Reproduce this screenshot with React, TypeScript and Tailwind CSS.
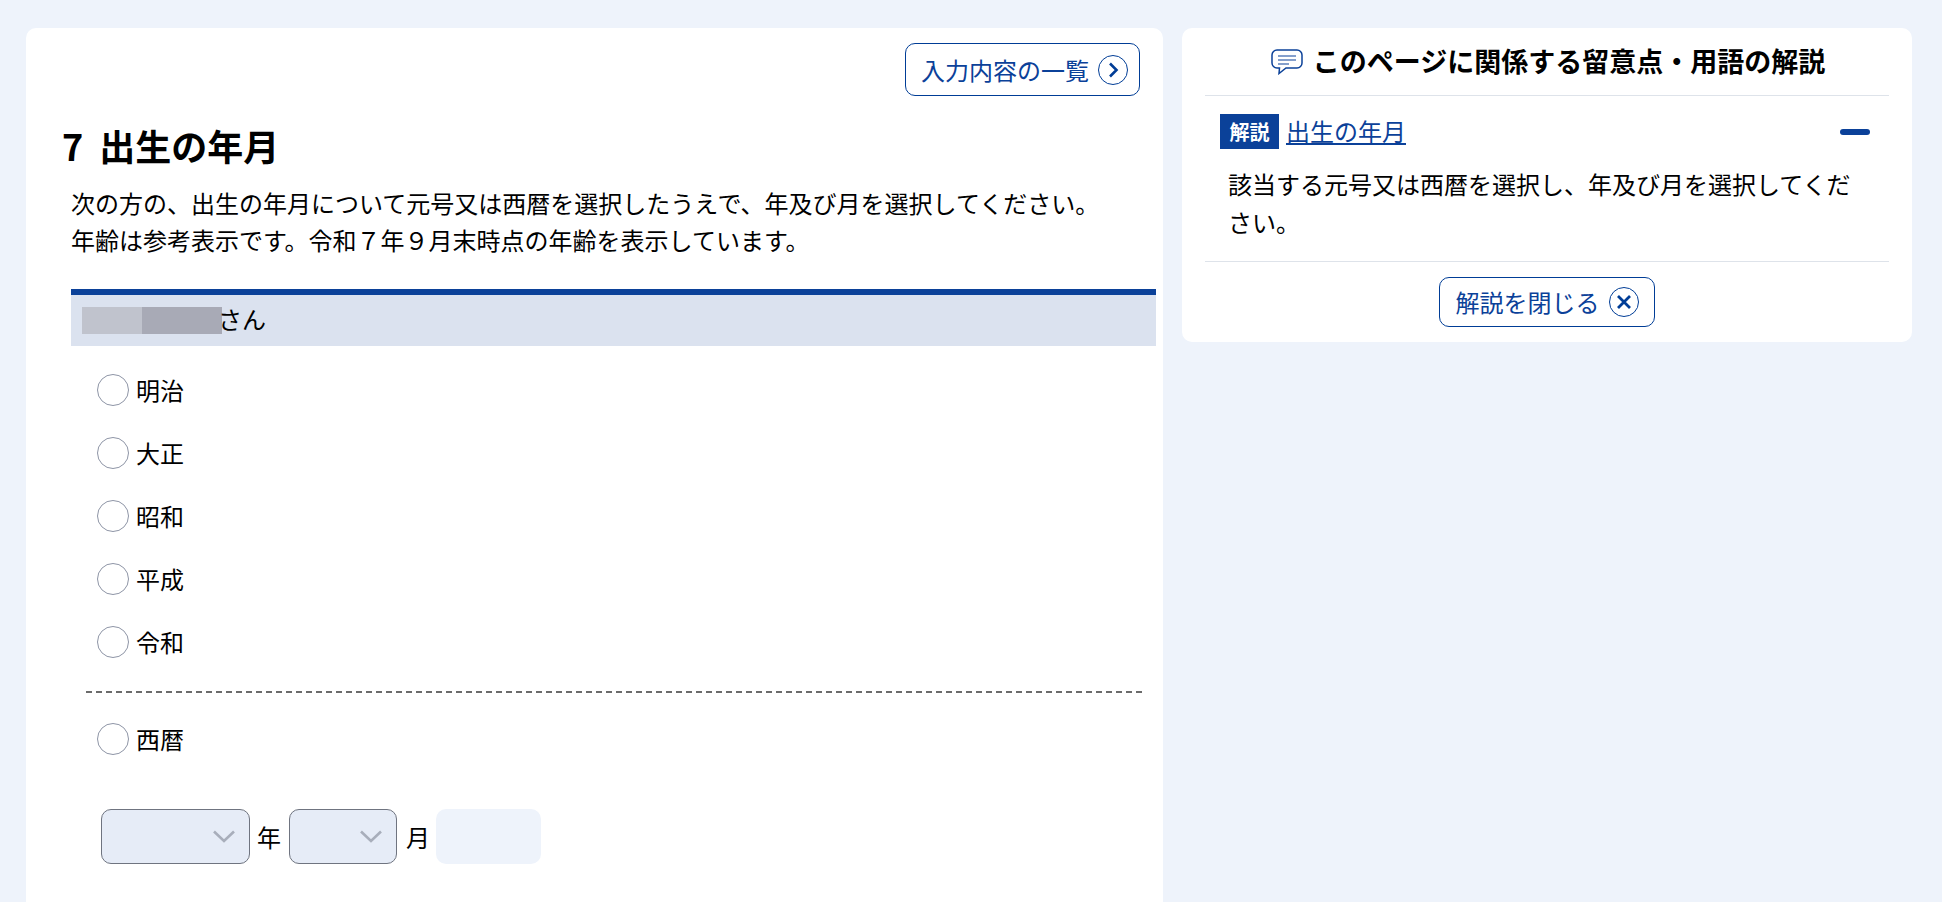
const FONT = "font-['Noto_Sans_CJK_JP','Noto_Sans',sans-serif]";
const ERAS = ['明治', '大正', '昭和', '平成', '令和'];

const Radio = ({ label }: { label: string }) => (
	<label className="flex items-center h-[32px] gap-[7px]">
		<span className="w-[32px] h-[32px] rounded-full border border-[#8e95a6] bg-white" />
		<span className="text-[24px] leading-[32px] text-black">{label}</span>
	</label>
);

const Select = ({ width }: { width: string }) => (
	<div className={`${width} h-[55px] rounded-[10px] border border-[#6f7480] bg-[#e6ecf7] flex items-center justify-end pr-[14px]`}>
		<svg width="22" height="13" viewBox="0 0 22 13" fill="none" stroke="#a8aebb" strokeWidth="2.6">
			<path d="M1 1.500 11 11 21 1.500" />
		</svg>
	</div>
);

const OutlineButton = ({ label, icon, className }: { label: string; icon: React.ReactNode; className: string }) => (
	<button className={`flex items-center justify-center gap-[9px] border border-[#003d96] rounded-[10px] bg-white text-[#0b4199] text-[24px] ${className}`}>
		{label}
		{icon}
	</button>
);

const ChevronCircle = () => (
	<svg width="30" height="30" viewBox="0 0 30 30" fill="none" stroke="#003d96">
		<circle cx="15" cy="15" r="14.5" />
		<path d="M12 8.500 18.500 15 12 21.500" strokeWidth="2.600" />
	</svg>
);

const CloseCircle = () => (
	<svg width="30" height="30" viewBox="0 0 30 30" fill="none" stroke="#003d96">
		<circle cx="15" cy="15" r="14.5" />
		<path d="M9 9 21 21M21 9 9 21" strokeWidth="2.800" />
	</svg>
);

const CommentIcon = () => (
	<svg width="32" height="26" viewBox="0 0 32 26" fill="none" stroke="#0b4199" strokeWidth="1.500">
		<path d="M6 1h20a5 5 0 0 1 5 5v8a5 5 0 0 1-5 5H15l-7 5.500 .5-5.500H6a5 5 0 0 1-5-5V6a5 5 0 0 1 5-5Z" />
		<path d="M7 7h18M7 11h18M7 15h11" strokeWidth="1.200" />
	</svg>
);

export default function App() {
	return (
		<div className={`${FONT} h-[902px] overflow-hidden bg-[#eef3fb] flex items-start gap-[19px] pt-[28px] pl-[26px] pr-[30px]`}>
			<main className="w-[1137px] h-[874px] bg-white rounded-t-[10px] flex flex-col">
				<div className="flex justify-end pt-[15px] pr-[23px]">
					<OutlineButton
						label="入力内容の一覧"
						icon={<ChevronCircle />}
						className="w-[235px] h-[53px] pl-[4px]"
					/>
				</div>
				<h1 className="mt-[24px] pl-[36px] text-[36px] leading-[50px] font-bold text-black">
					<span className="mr-[16px]">7</span>出生の年月
				</h1>
				<div className="mt-[14px] pl-[45px] text-[24px] leading-[37px] text-black">
					<p>次の方の、出生の年月について元号又は西暦を選択したうえで、年及び月を選択してください。</p>
					<p>年齢は参考表示です。令和７年９月末時点の年齢を表示しています。</p>
				</div>
				<div className="mt-[31px] ml-[45px] mr-[7px] h-[57px] border-t-[6px] border-[#0b4199] bg-[#dbe2ef] flex items-center pl-[11px]">
					<span className="w-[60px] h-[27px] bg-[#c0c3cd] bg-[radial-gradient(#8f929e_0.6px,transparent_0.6px)] bg-[size:4px_4px]" />
					<span className="w-[80px] h-[27px] bg-[#a8aab6] bg-[radial-gradient(#8f929e_0.6px,transparent_0.6px)] bg-[size:2px_2px]" />
					<span className="-ml-[4px] -mt-[4px] text-[24px] text-black">さん</span>
				</div>
				<div className="mt-[28px] pl-[71px] flex flex-col gap-[31px]">
					{ERAS.map((era) => (
						<Radio key={era} label={era} />
					))}
				</div>
				<hr className="mt-[33px] ml-[60px] mr-[21px] border-0 border-t-2 border-dashed border-[#6b6b6b]" />
				<div className="mt-[30px] pl-[71px]">
					<Radio label="西暦" />
				</div>
				<div className="mt-[54px] pl-[75px] flex items-center text-[24px] text-black">
					<Select width="w-[149px]" />
					<span className="ml-[7px] mr-[8px]">年</span>
					<Select width="w-[108px]" />
					<span className="ml-[9px] mr-[6px]">月</span>
					<div className="w-[105px] h-[55px] rounded-[10px] bg-[#eef3fb]" />
				</div>
			</main>
			<aside className="w-[730px] h-[314px] bg-white rounded-[10px] px-[23px] flex flex-col">
				<div className="h-[68px] pl-[2px] flex items-center justify-center gap-[10px] border-b border-[#dee3ea]">
					<CommentIcon />
					<h2 className="text-[27px] font-bold text-black">このページに関係する留意点・用語の解説</h2>
				</div>
				<div className="px-[15px] border-b border-[#dee3ea] h-[166px]">
					<div className="mt-[18px] flex items-center h-[35px]">
						<span className="w-[59px] h-[35px] bg-[#0b4199] text-white text-[20px] font-bold flex items-center justify-center">解説</span>
						<a className="ml-[7px] -mt-[2px] text-[24px] text-[#0b4199] underline">出生の年月</a>
						<span className="ml-auto mr-[4px] w-[30px] h-[6px] rounded-full bg-[#0b4199]" />
					</div>
					<p className="mt-[16px] ml-[8px] text-[24px] leading-[38px] text-black">該当する元号又は西暦を選択し、年及び月を選択してください。</p>
				</div>
				<div className="flex justify-center pt-[15px]">
					<OutlineButton label="解説を閉じる" icon={<CloseCircle />} className="w-[216px] h-[50px] pb-[1px]" />
				</div>
			</aside>
		</div>
	);
}
